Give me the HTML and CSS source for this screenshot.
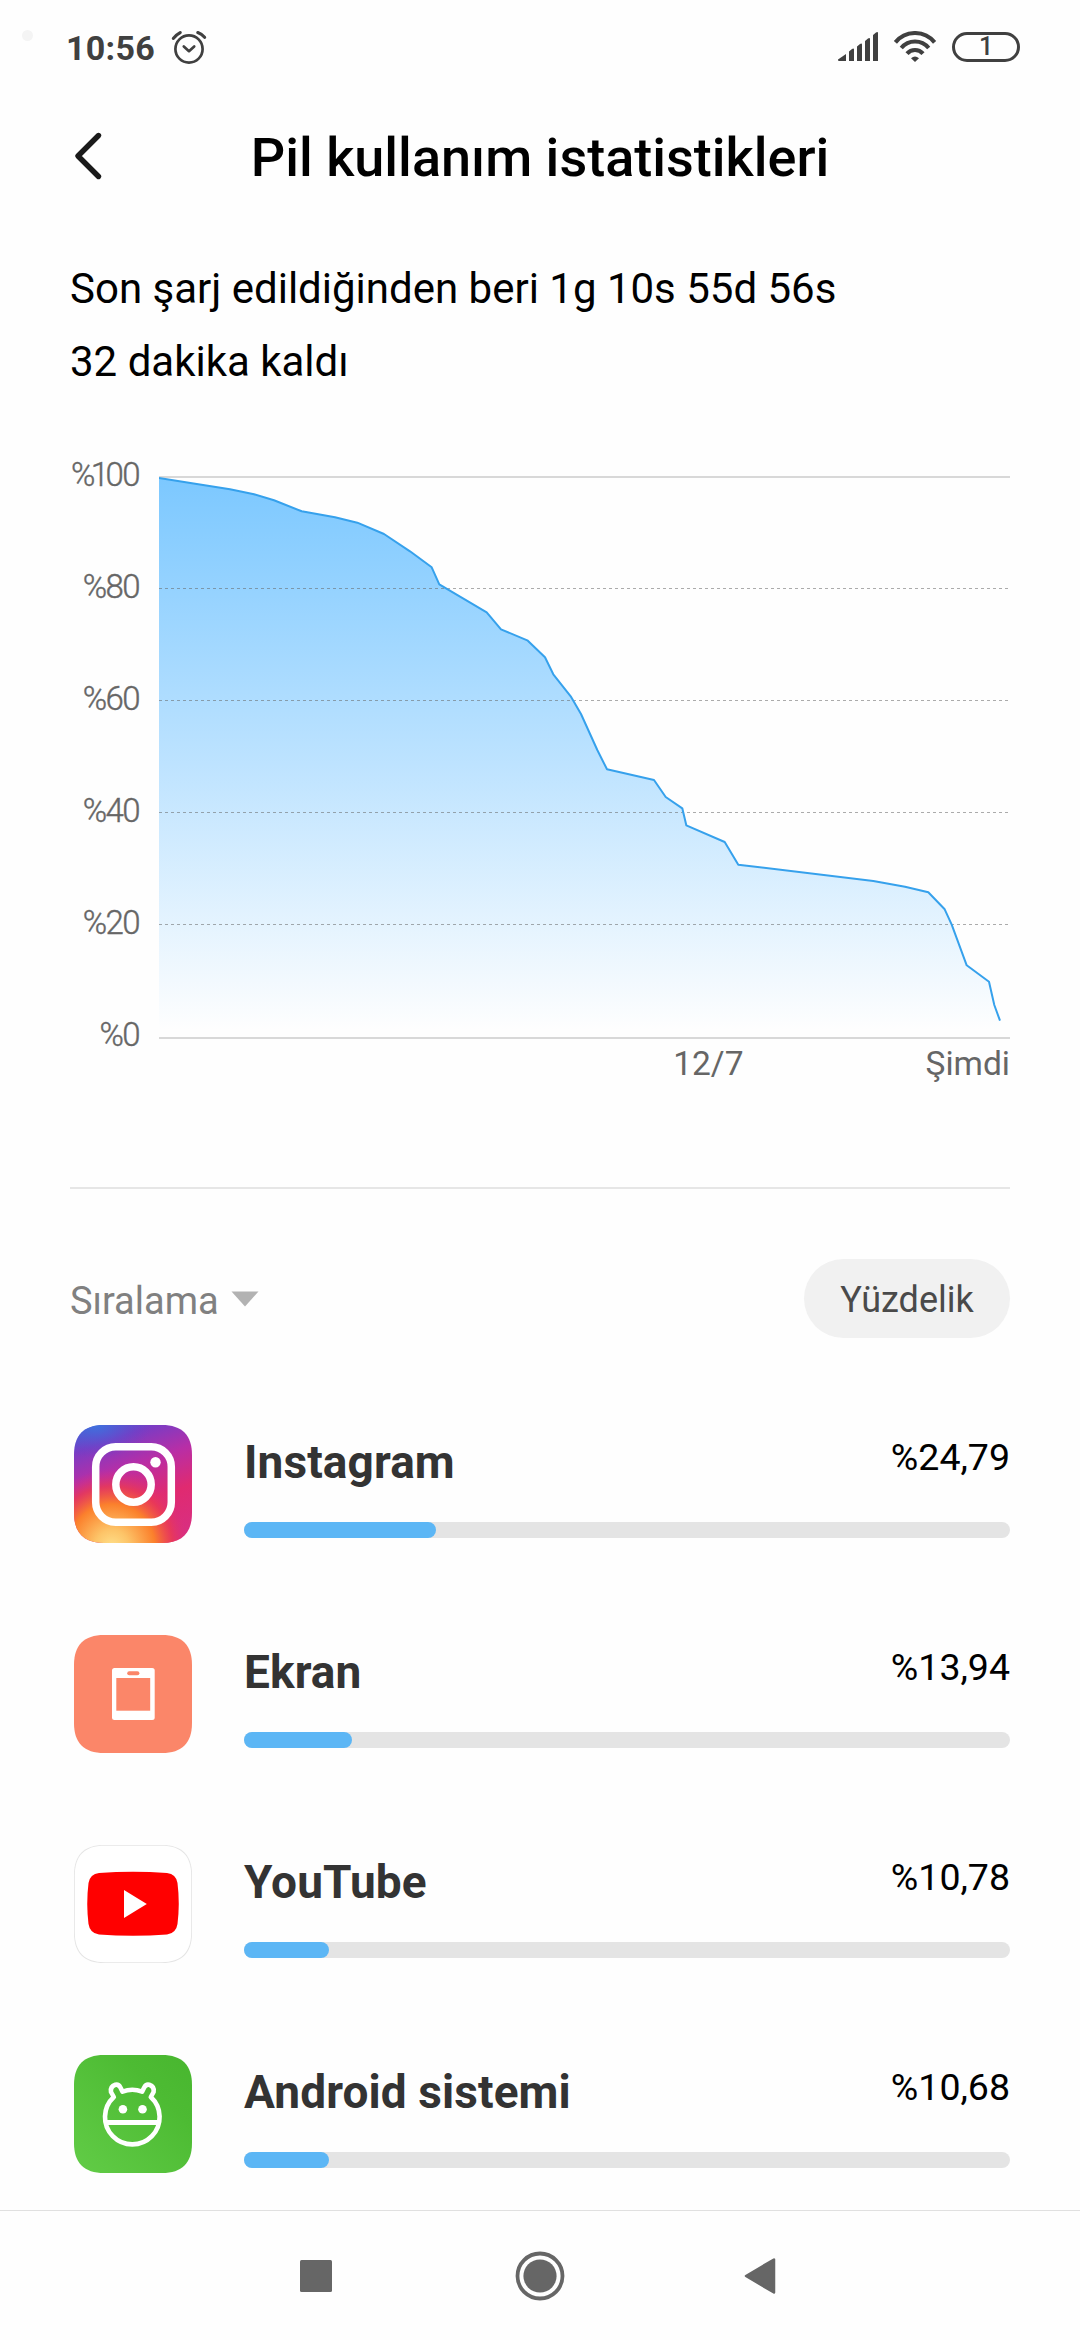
FILE: index.html
```html
<!DOCTYPE html>
<html lang="tr">
<head>
<meta charset="utf-8">
<title>Pil kullanım istatistikleri</title>
<link rel="stylesheet" href="styles.css">
</head>
<body>
<div class="status">
  <span class="camera-dot"></span>
  <span class="clock">10:56</span>
  <svg class="alarm" width="36" height="36" viewBox="0 0 36 36" fill="none" stroke="#404040" stroke-width="2.7" stroke-linecap="round" stroke-linejoin="round">
    <circle cx="18" cy="19" r="13.6"/>
    <path d="M12.8 16.5 18 21.2l5.2-4.7"/>
    <path d="M2.4 8.4Q5 4.8 9.2 2.6M33.600 7.200Q31 4.300 26.800 2.600" stroke-width="3.2"/>
  </svg>
  <span class="spacer"></span>
  <svg class="signal" width="40" height="30" viewBox="0 0 40 30" fill="#404040">
    <path d="M0 27.500 8 22v7H1q-1 0-1-1zM11 19.500l3-2.500q2-1 2 .500V29h-5zM19 14.500l3-2.500q2-1 2 .500V29h-5zM27 9l3-2.500q2-1 2 .500V29h-5zM35 3l3-2.500q2-1 2 .500V29h-5z"/>
  </svg>
  <svg class="wifi" width="44" height="32" viewBox="0 0 44 32" fill="none" stroke="#404040" stroke-width="4.100" stroke-linecap="butt">
    <path d="M2.400 11.400A25.200 25.200 0 0 1 41.600 11.400M8.300 17A17.800 17.800 0 0 1 35.700 17M14 22.600A10.600 10.600 0 0 1 30 22.600"/>
    <path d="M18 27.300Q22 23.700 26 27.300L22 31z" fill="#404040" stroke="none"/>
  </svg>
  <span class="battery">1</span>
</div>

<header class="header">
  <svg class="back" width="32" height="50" viewBox="0 0 32 50" fill="none" stroke="#1a1a1a" stroke-width="5.400" stroke-linecap="round" stroke-linejoin="round">
    <path d="M26.500 4.500 6 25l20.500 20.500"/>
  </svg>
  <h1 class="title">Pil kullanım istatistikleri</h1>
</header>

<main class="content">
  <section class="summary">
    <p>Son şarj edildiğinden beri 1g 10s 55d 56s</p>
    <p>32 dakika kaldı</p>
  </section>

  <section class="chart">
    <div class="y-axis">
      <span>%<i class="one">1</i>00</span><span>%80</span><span>%60</span><span>%40</span><span>%20</span><span>%0</span>
    </div>
    <div class="plot-area">
      <svg class="plot" width="851" height="564" viewBox="159 476 851 564" fill="none">
        <defs>
          <linearGradient id="area" gradientUnits="userSpaceOnUse" x1="0" y1="478" x2="0" y2="1030">
            <stop offset="0" stop-color="#7cc8ff"/>
            <stop offset="0.500" stop-color="#bbe2ff"/>
            <stop offset="1" stop-color="#fefefe"/>
          </linearGradient>
        </defs>
        <path d="M159 477H1010M159 1038H1010" stroke="#d8d8d8" stroke-width="2"/>
        <path fill="url(#area)" d="M159 478 192 483.300 230 489.300 254 494.300 274 500.300 301.700 511.300 335 517.300 357.300 522.700 384 534 410 551.300 431.700 567.300 439.300 584.300 486.700 612.300 501 629.300 527.300 640.300 545 657.300 553.300 674.300 570.700 696.300 581 714 597.300 750 607 769.300 654 780 665.700 797 682.300 808.300 686.300 825.300 724.700 842 738.300 864.700 873.300 881 905 886.700 928.300 892.300 944.700 909.300 951.700 924.700 966.700 965.300 989 981.700 994.300 1005 1000 1020.700V1037H159z"/>
        <path stroke="#666" stroke-opacity="0.550" stroke-width="1" stroke-dasharray="3 3" d="M159 588.500H1010M159 700.500H1010M159 812.500H1010M159 924.500H1010"/>
        <path stroke="#36a1ec" stroke-width="2" stroke-linejoin="round" d="M159 478 192 483.300 230 489.300 254 494.300 274 500.300 301.700 511.300 335 517.300 357.300 522.700 384 534 410 551.300 431.700 567.300 439.300 584.300 486.700 612.300 501 629.300 527.300 640.300 545 657.300 553.300 674.300 570.700 696.300 581 714 597.300 750 607 769.300 654 780 665.700 797 682.300 808.300 686.300 825.300 724.700 842 738.300 864.700 873.300 881 905 886.700 928.300 892.300 944.700 909.300 951.700 924.700 966.700 965.300 989 981.700 994.300 1005 1000 1020.700"/>
      </svg>
      <div class="x-axis"><span class="date">12/7</span><span>Şimdi</span></div>
    </div>
  </section>

  <div class="toolbar">
    <div class="sort">Sıralama
      <svg class="caret" width="28" height="16" viewBox="0 0 28 16"><path fill="#b2b2b2" d="M.500 0.500H27.500L14 15.500z"/></svg>
    </div>
    <div class="pill">Yüzdelik</div>
  </div>

  <section class="apps">
    <article class="app">
      <svg class="app-icon" width="118" height="118" viewBox="0 0 118 118">
        <defs>
          <linearGradient id="igBase" x1="0.200" y1="0" x2="0.550" y2="1">
            <stop offset="0" stop-color="#4a5fd6"/>
            <stop offset="0.150" stop-color="#7a3cc4"/>
            <stop offset="0.400" stop-color="#b82ea6"/>
            <stop offset="0.700" stop-color="#e02a70"/>
            <stop offset="1" stop-color="#d92e7f"/>
          </linearGradient>
          <radialGradient id="igWarm" gradientUnits="userSpaceOnUse" cx="38" cy="122" r="78">
            <stop offset="0" stop-color="#ffe08a"/>
            <stop offset="0.220" stop-color="#fdc468"/>
            <stop offset="0.550" stop-color="#fb802c"/>
            <stop offset="0.780" stop-color="#ec3b50" stop-opacity="0.750"/>
            <stop offset="1" stop-color="#d92e7f" stop-opacity="0"/>
          </radialGradient>
          <radialGradient id="igBlue" gradientUnits="userSpaceOnUse" cx="22" cy="0" r="55" gradientTransform="matrix(1 0 0 .6 0 0)">
            <stop offset="0" stop-color="#3f72de"/>
            <stop offset="1" stop-color="#6540c8" stop-opacity="0"/>
          </radialGradient>
          <path id="tile" d="M30 0H88C108 0 118 10 118 30V88C118 108 108 118 88 118H30C10 118 0 108 0 88V30C0 10 10 0 30 0z"/>
        </defs>
        <use href="#tile" fill="url(#igBase)"/>
        <use href="#tile" fill="url(#igBlue)"/>
        <use href="#tile" fill="url(#igWarm)"/>
        <g fill="none" stroke="#fff" stroke-width="7.500">
          <rect x="21.700" y="21.700" width="75.600" height="75.600" rx="20"/>
          <circle cx="59.500" cy="59.500" r="17.700"/>
        </g>
        <circle cx="81.500" cy="37.300" r="5.200" fill="#fff"/>
      </svg>
      <div class="app-body">
        <div class="app-line"><span class="name">Instagram</span><span class="pct">%24,79</span></div>
        <div class="bar"><div class="fill" style="width:192px"></div></div>
      </div>
    </article>

    <article class="app">
      <svg class="app-icon" width="118" height="118" viewBox="0 0 118 118">
        <use href="#tile" fill="#fb8669"/>
        <rect x="38" y="33" width="42.700" height="52" rx="2.500" fill="#fff"/>
        <rect x="42.300" y="43" width="33.900" height="32.700" fill="#fb8669"/>
        <rect x="53.200" y="36.200" width="12.200" height="4" rx="2" fill="#fb8669"/>
      </svg>
      <div class="app-body">
        <div class="app-line"><span class="name">Ekran</span><span class="pct">%13,94</span></div>
        <div class="bar"><div class="fill" style="width:108px"></div></div>
      </div>
    </article>

    <article class="app">
      <svg class="app-icon" width="118" height="118" viewBox="0 0 118 118">
        <use href="#tile" fill="#e4e4e4"/>
        <use href="#tile" fill="#fff" transform="translate(.8 .8) scale(.9864)"/>
        <path fill="#f00" d="M25 28Q59 25.600 93 28Q102 29 103.500 38Q106 58.500 103.500 79Q102 88.500 93 89.500Q59 92 25 89.500Q16 88.500 14.500 79Q12 58.500 14.500 38Q16 29 25 28z"/>
        <path fill="#fff" d="M50 45 72.800 59 50 73z"/>
      </svg>
      <div class="app-body">
        <div class="app-line"><span class="name">YouTube</span><span class="pct">%10,78</span></div>
        <div class="bar"><div class="fill" style="width:85px"></div></div>
      </div>
    </article>

    <article class="app">
      <svg class="app-icon" width="118" height="118" viewBox="0 0 118 118">
        <defs>
          <linearGradient id="green" x1="0" y1="1" x2="1" y2="0">
            <stop offset="0" stop-color="#62cc47"/>
            <stop offset="0.700" stop-color="#4dbb33"/>
            <stop offset="1" stop-color="#48b62f"/>
          </linearGradient>
        </defs>
        <use href="#tile" fill="url(#green)"/>
        <g fill="none" stroke="#fff" stroke-width="4.600" stroke-linejoin="round">
          <path d="M39.800 42A27.300 27.300 0 1 0 76.800 42L79.600 37Q80.500 31.500 75.300 29.800Q72 29 70.200 32.500L68.100 36.600Q58.300 33 48.500 36.600L46.400 32.500Q44.600 29 41.300 29.800Q36.100 31.500 37 37z"/>
          <path d="M32 67.600H84.600" stroke-width="5"/>
        </g>
        <circle cx="48.900" cy="54.300" r="4.300" fill="#fff"/>
        <circle cx="68.500" cy="54.300" r="4.300" fill="#fff"/>
      </svg>
      <div class="app-body">
        <div class="app-line"><span class="name">Android sistemi</span><span class="pct">%10,68</span></div>
        <div class="bar"><div class="fill" style="width:85px"></div></div>
      </div>
    </article>
  </section>
</main>

<nav class="nav">
  <svg width="32" height="32" viewBox="0 0 32 32"><rect width="32" height="32" rx="1.500" fill="#666"/></svg>
  <svg width="50" height="50" viewBox="0 0 50 50"><circle cx="25" cy="25" r="22.500" fill="none" stroke="#666" stroke-width="3.800"/><circle cx="25" cy="25" r="16.600" fill="#666"/></svg>
  <svg width="32" height="38" viewBox="0 0 32 38"><path d="M2 19 30 2.500V35.500z" fill="#666" stroke="#666" stroke-width="2.500" stroke-linejoin="round"/></svg>
</nav>
</body>
</html>
```
FILE: styles.css
```css
* { box-sizing: border-box; }

body {
  margin: 0;
  width: 1080px;
  height: 2340px;
  display: flex;
  flex-direction: column;
  overflow: hidden;
  background: #fefefe;
  color: #000;
  font-family: Roboto, "Noto Sans", sans-serif;
}

h1, p { margin: 0; }
svg { display: block; flex: none; }

.status {
  height: 94px;
  flex: none;
  display: flex;
  align-items: flex-start;
  padding: 28px 60px 0 22px;
  color: #404040;
}
.camera-dot { width: 11px; height: 11px; margin: 2px 33px 0 0; border-radius: 50%; background: #f4f4f4; }
.clock { font-size: 34px; font-weight: 700; line-height: 41px; letter-spacing: 0.3px; }
.alarm { margin: 2px 0 0 16px; }
.spacer { flex: 1; }
.signal { margin-top: 4px; }
.wifi { margin: 3px 15px 0 15px; }
.battery {
  width: 68px;
  height: 30px;
  margin-top: 4px;
  border: 3px solid #404040;
  border-radius: 15px;
  font-size: 25px;
  font-weight: 500;
  line-height: 24px;
  text-align: center;
}

.header { height: 127px; flex: none; display: grid; grid-template-columns: 110px 1fr 110px; align-items: center; }
.back { margin: -4px 0 0 72px; }
.title { font-size: 54px; font-weight: 500; line-height: 64px; text-align: center; white-space: nowrap; }

.content { flex: 1; min-height: 0; overflow: hidden; padding: 31px 70px 0; }
.summary { font-size: 42px; line-height: 73px; }

.chart {
  display: grid;
  grid-template-columns: 89px 851px;
  height: 672px;
  margin-top: 20px;
  color: #666;
}
.y-axis { display: grid; grid-template-rows: repeat(6, 112px); text-align: right; padding-right: 20px; }
.y-axis span { font-size: 33px; font-weight: 300; line-height: 113px; height: 112px; letter-spacing: -1.6px; -webkit-text-stroke: 0.4px #666; }
.one { font-style: normal; margin: 0 -2px 0 -3px; }
.plot-area { padding-top: 58px; }
.x-axis { display: flex; justify-content: flex-end; gap: 182px; font-size: 33.5px; line-height: 48px; }

.toolbar {
  display: flex;
  justify-content: space-between;
  margin-top: 97px;
  padding-top: 70px;
  border-top: 2px solid #e6e6e6;
}
.sort { display: flex; gap: 12px; font-size: 38px; line-height: 84px; height: 79px; color: #808080; }
.caret { margin-top: 32px; }
.pill {
  width: 206px;
  height: 79px;
  border-radius: 40px;
  background: #f1f1f1;
  color: #4a4a4a;
  font-size: 36px;
  line-height: 83px;
  text-align: center;
}

.apps { margin-top: 41px; }
.app { display: flex; gap: 52px; height: 210px; padding: 46px 0 0 4px; }
.app-body { flex: 1; }
.app-line { height: 97px; display: flex; justify-content: space-between; }
.name { font-size: 46px; font-weight: 700; line-height: 74px; letter-spacing: 0.1px; color: #333; }
.pct { font-size: 37.5px; line-height: 64px; }
.bar { height: 16px; border-radius: 8px; background: #e4e4e4; }
.fill { height: 16px; border-radius: 8px; background: #5cb6f5; }

.nav {
  flex: none;
  height: 130px;
  display: flex;
  align-items: center;
  padding-left: 300px;
  gap: 183px;
  border-top: 1px solid #e0e0e0;
}
.nav svg:last-child { margin-left: -4px; }
```
